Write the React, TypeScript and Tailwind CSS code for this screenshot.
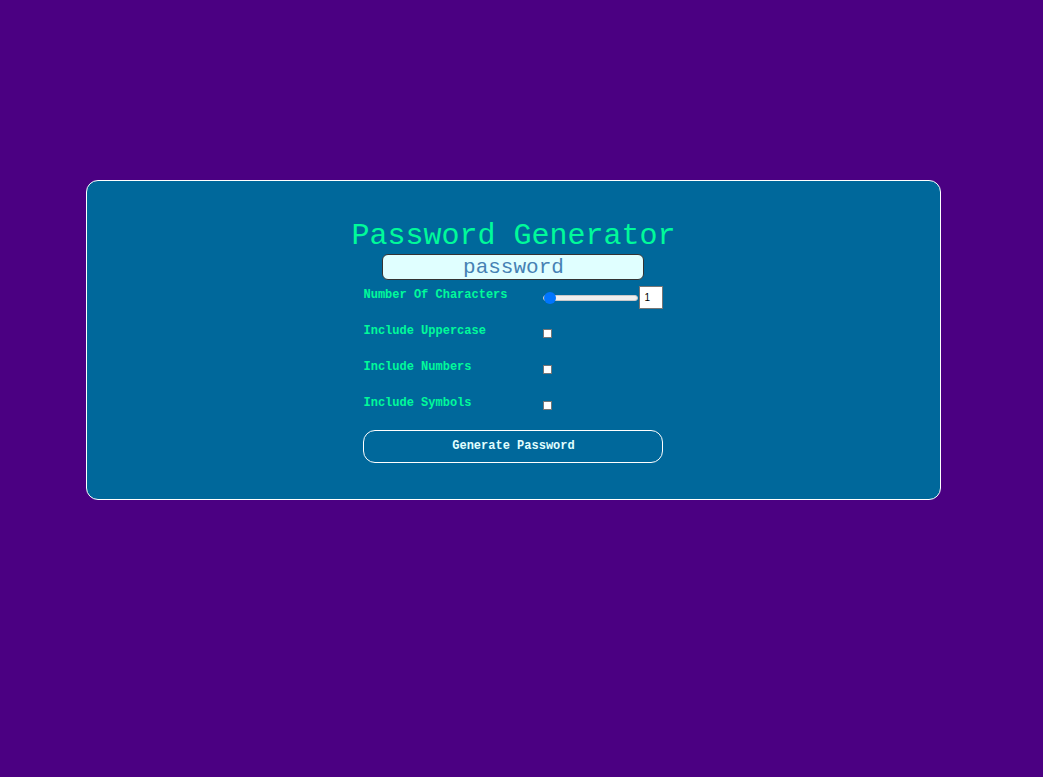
import { useState } from "react";

const options = [
  { id: "uppercase", label: "Include Uppercase" },
  { id: "numbers", label: "Include Numbers" },
  { id: "symbols", label: "Include Symbols" },
];

function generate(length: number, picked: Record<string, boolean>) {
  let pool = "abcdefghijklmnopqrstuvwxyz";
  if (picked.uppercase) pool += "ABCDEFGHIJKLMNOPQRSTUVWXYZ";
  if (picked.numbers) pool += "0123456789";
  if (picked.symbols) pool += "!@#$%^&*()-_=+?";
  return Array.from({ length }, () => pool[Math.floor(Math.random() * pool.length)]).join("");
}

export default function App() {
  const [length, setLength] = useState(1);
  const [password, setPassword] = useState("password");
  const [picked, setPicked] = useState<Record<string, boolean>>({});

  return (
    <main className="flex min-h-screen flex-col items-center bg-[#4b0082] pt-[180px] pr-4 font-['Courier_New','Liberation_Mono',monospace]">
      <section className="flex w-5/6 flex-col items-center rounded-xl border border-white bg-[#00689b] pt-[37px] pb-9">
        <h1 className="text-[30px] leading-9 text-[#00fa9a]">Password Generator</h1>
        <input
          aria-label="Generated password"
          readOnly
          value={password}
          className="h-[26px] w-[262px] rounded-md border border-[#333333] bg-[#e0ffff] text-center text-[21px] leading-6 text-[#4682b4] outline-none"
        />
        <form
          className="w-[300px] max-w-full text-xs font-bold text-[#00fa9a]"
          onSubmit={(e) => {
            e.preventDefault();
            setPassword(generate(length, picked));
          }}
        >
          <div className="grid h-9 grid-cols-[3fr_2fr] pt-1.5">
            <label htmlFor="length" className="leading-[18px]">Number Of Characters</label>
            <div className="flex h-[23px] items-center gap-px">
              <input
                id="length"
                type="range"
                min={1}
                max={50}
                value={length}
                onChange={(e) => setLength(Number(e.target.value))}
                className="h-3 w-full min-w-0 flex-1 appearance-none bg-transparent [&::-webkit-slider-runnable-track]:h-1.5 [&::-webkit-slider-runnable-track]:rounded-full [&::-webkit-slider-runnable-track]:border [&::-webkit-slider-runnable-track]:border-[#c8c8c8] [&::-webkit-slider-runnable-track]:bg-[#efefef] [&::-webkit-slider-thumb]:-mt-1 [&::-webkit-slider-thumb]:size-3 [&::-webkit-slider-thumb]:appearance-none [&::-webkit-slider-thumb]:rounded-full [&::-webkit-slider-thumb]:bg-[#0075ff]"
              />
              <input
                aria-label="Character count"
                type="text"
                inputMode="numeric"
                value={length}
                onChange={(e) => setLength(Math.min(50, Math.max(1, Number(e.target.value) || 1)))}
                className="h-[23px] w-6 border border-[#767676] bg-white pl-1 font-['Liberation_Sans',sans-serif] text-[10px] font-normal text-black"
              />
            </div>
          </div>
          {options.map((o) => (
            <div key={o.id} className="grid h-9 grid-cols-[3fr_2fr] pt-1.5">
              <label htmlFor={o.id} className="leading-[18px]">{o.label}</label>
              <div className="flex h-[23px] items-center">
                <input
                  id={o.id}
                  type="checkbox"
                  checked={!!picked[o.id]}
                  onChange={(e) => setPicked({ ...picked, [o.id]: e.target.checked })}
                  className="size-[9px] appearance-none border border-[#767676] bg-white checked:bg-[#0075ff]"
                />
              </div>
            </div>
          ))}
          <button
            type="submit"
            className="mt-1.5 block h-[33px] w-full rounded-xl border border-white pb-0.5 text-xs font-bold text-[#e0ffff]"
          >
            Generate Password
          </button>
        </form>
      </section>
    </main>
  );
}
